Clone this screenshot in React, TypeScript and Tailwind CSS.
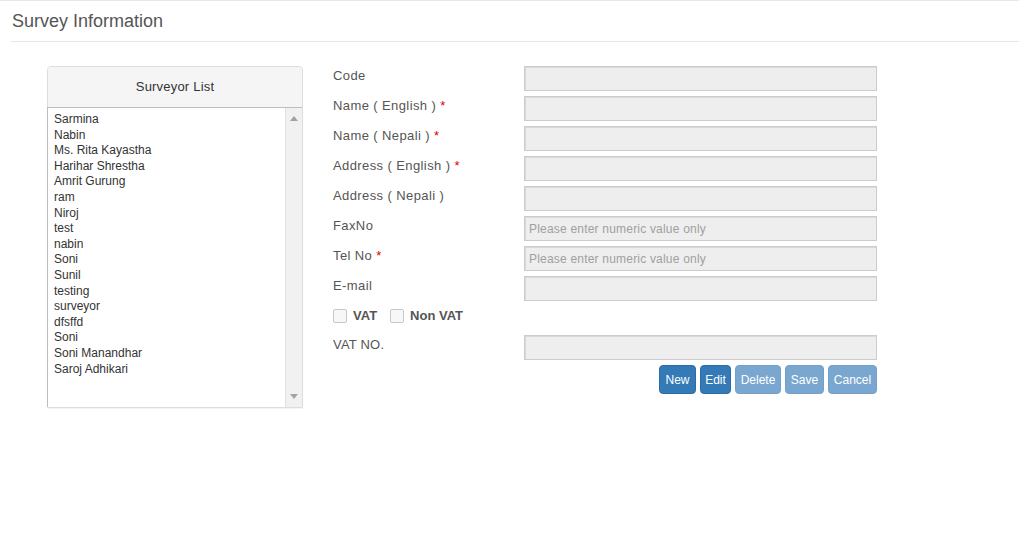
import React from "react";

const surveyors = [
  "Sarmina",
  "Nabin",
  "Ms. Rita Kayastha",
  "Harihar Shrestha",
  "Amrit Gurung",
  "ram",
  "Niroj",
  "test",
  "nabin",
  "Soni",
  "Sunil",
  "testing",
  "surveyor",
  "dfsffd",
  "Soni",
  "Soni Manandhar",
  "Saroj Adhikari",
];

type Field = { label: string; required?: boolean; placeholder?: string };

const fields: Field[] = [
  { label: "Code" },
  { label: "Name ( English )", required: true },
  { label: "Name ( Nepali )", required: true },
  { label: "Address ( English )", required: true },
  { label: "Address ( Nepali )" },
  { label: "FaxNo", placeholder: "Please enter numeric value only" },
  { label: "Tel No", required: true, placeholder: "Please enter numeric value only" },
  { label: "E-mail" },
];

function Input({ placeholder }: { placeholder?: string }) {
  return (
    <div className="w-[353px] h-[25px] bg-[#eeeeee] border border-[#cccccc] shadow-[inset_1px_1px_0_#d9d9d9] pl-[4px] flex items-center text-[12px] text-[#a0a0a0] tracking-[0.2px]">
      {placeholder}
    </div>
  );
}

function Label({ f }: { f: Field }) {
  return (
    <div className="w-[191px] pt-[1px] leading-[18px] text-[13px] tracking-[0.4px] text-[#555555]">
      {f.label}
      {f.required && <span className="text-[#e00000]"> *</span>}
    </div>
  );
}

function Button({
  children,
  disabled,
  w,
}: {
  children: React.ReactNode;
  disabled?: boolean;
  w: string;
}) {
  return (
    <div
      className={
        w +
        " h-[29px] rounded-[4px] flex items-center justify-center text-[12px] text-white border " +
        (disabled
          ? "bg-[#7aa7d0] border-[#72a0cb]"
          : "bg-[#337ab7] border-[#2e6da4]")
      }
    >
      {children}
    </div>
  );
}

export default function App() {
  return (
    <div
      className="w-[1019px] h-[555px] bg-white overflow-hidden"
      style={{ fontFamily: '"Liberation Sans", Arial, sans-serif' }}
    >
      <div className="border-t border-[#e8e8e8]">
        <div className="ml-[11px] h-[41px] border-b border-[#e5e5e5] pl-[1px] text-[18px] leading-[40px] text-[#555555]">
          Survey Information
        </div>
      </div>

      <div className="flex pt-[24px] pl-[47px]">
        {/* Surveyor list panel */}
        <div className="w-[256px] h-[342px] border border-[#dddddd] rounded-t-[4px] flex flex-col shadow-[0_1px_1px_rgba(0,0,0,0.05)]">
          <div className="h-[40px] bg-[#f5f5f5] rounded-t-[4px] flex items-center justify-center text-[13px] text-[#333333] tracking-[0.2px]">
            Surveyor List
          </div>
          <div className="flex-1 flex border-t border-[#bdbdbd] border-l border-[#bdbdbd] -ml-px">
            <div className="flex-1 pl-[6px] pt-[4px] text-[12px] leading-[15.6px] text-[#333333]">
              {surveyors.map((s, i) => (
                <div key={i}>{s}</div>
              ))}
            </div>
            <div className="w-[17px] bg-[#f1f1f1] border-l border-[#e0e0e0] flex flex-col items-center justify-between py-[8px]">
              <svg width="8" height="5" viewBox="0 0 8 5">
                <polygon points="4,0 8,5 0,5" fill="#a3a3a3" />
              </svg>
              <svg width="8" height="5" viewBox="0 0 8 5">
                <polygon points="0,0 8,0 4,5" fill="#a3a3a3" />
              </svg>
            </div>
          </div>
        </div>

        {/* Form */}
        <div className="ml-[30px] flex flex-col">
          {fields.map((f, i) => (
            <div key={i} className="flex items-start mb-[5px]">
              <Label f={f} />
              <Input placeholder={f.placeholder} />
            </div>
          ))}
          <div className="h-[24px] mb-[5px] flex items-start pt-[1px] leading-[18px] text-[13px] font-bold text-[#555555]">
            <div className="mt-[2px] w-[14px] h-[14px] border border-[#c8c8c8] bg-[#f7f7f7] rounded-[2px]" />
            <span className="ml-[6px]">VAT</span>
            <div className="mt-[2px] ml-[13px] w-[14px] h-[14px] border border-[#c8c8c8] bg-[#f7f7f7] rounded-[2px]" />
            <span className="ml-[6px]">Non VAT</span>
          </div>
          <div className="flex items-start mb-[5px]">
            <div className="w-[191px] pt-[1px] leading-[18px] text-[13px] tracking-[0.2px] text-[#555555]">
              VAT NO.
            </div>
            <Input />
          </div>
          <div className="flex justify-end gap-[4px]">
            <Button w="w-[37px]">New</Button>
            <Button w="w-[31px]">Edit</Button>
            <Button w="w-[46px]" disabled>
              Delete
            </Button>
            <Button w="w-[39px]" disabled>
              Save
            </Button>
            <Button w="w-[49px]" disabled>
              Cancel
            </Button>
          </div>
        </div>
      </div>
    </div>
  );
}
